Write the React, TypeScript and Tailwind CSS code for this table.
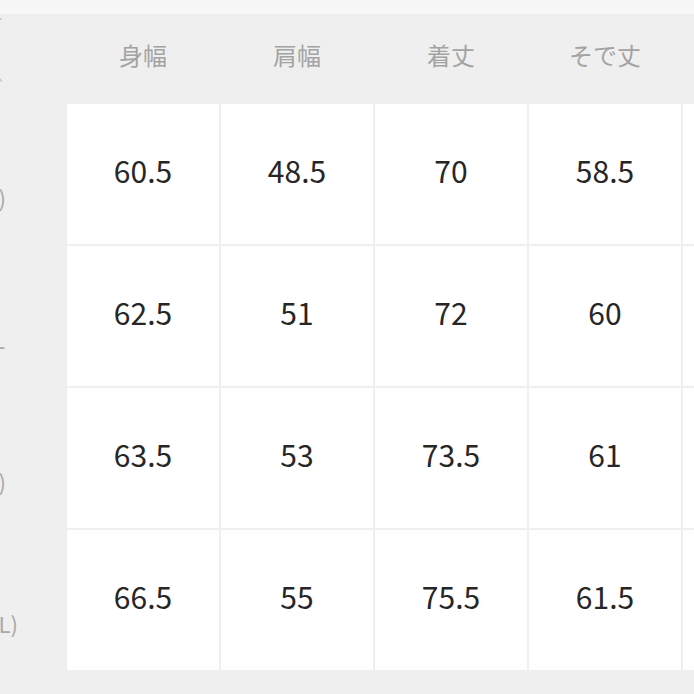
const headers = ["身幅", "肩幅", "着丈", "そで丈", "袖口"];

const rows = [
  { label: "M(2)", pad: "pr-[59px]", values: ["60.5", "48.5", "70", "58.5", "22"] },
  { label: "L", pad: "pr-[60px]", values: ["62.5", "51", "72", "60", "23"] },
  { label: "XL(3)", pad: "pr-[59px]", values: ["63.5", "53", "73.5", "61", "24"] },
  { label: "XXL(4L)", pad: "pr-[47px]", values: ["66.5", "55", "75.5", "61.5", "25"] },
];

export default function App() {
  return (
    <div
      className="w-[694px] h-[694px] overflow-hidden bg-[#efefef]"
      style={{ fontFamily: '"Noto Sans CJK JP", "Noto Sans", sans-serif' }}
    >
      <div className="h-[14px] bg-[#f7f7f7]" />
      <div className="grid grid-cols-[65px_152px_152px_152px_152px_152px] grid-rows-[88px_140px_140px_140px_140px] gap-[2px] w-max">
        {/* header row */}
        <div className="flex items-center justify-end overflow-hidden pr-[62px] pb-[8px] text-[22px] text-[#c4c4c4]">
          サイズ
        </div>
        {headers.map((h) => (
          <div
            key={h}
            className="flex items-center justify-center pb-[6px] bg-[#efefef] text-[24px] text-[#a3a3a3]"
          >
            {h}
          </div>
        ))}

        {rows.map((r, i) => (
          <>
            <div
              key={`l${i}`}
              className={`flex items-center justify-end overflow-hidden pt-[46px] text-[22px] text-[#a8a8a8] ${r.pad}`}
            >
              {r.label}
            </div>
            {r.values.map((v, j) => (
              <div
                key={`${i}-${j}`}
                className="flex items-center justify-center pb-[7px] bg-white text-[30px] text-[#262626]"
              >
                {v}
              </div>
            ))}
          </>
        ))}
      </div>
    </div>
  );
}
